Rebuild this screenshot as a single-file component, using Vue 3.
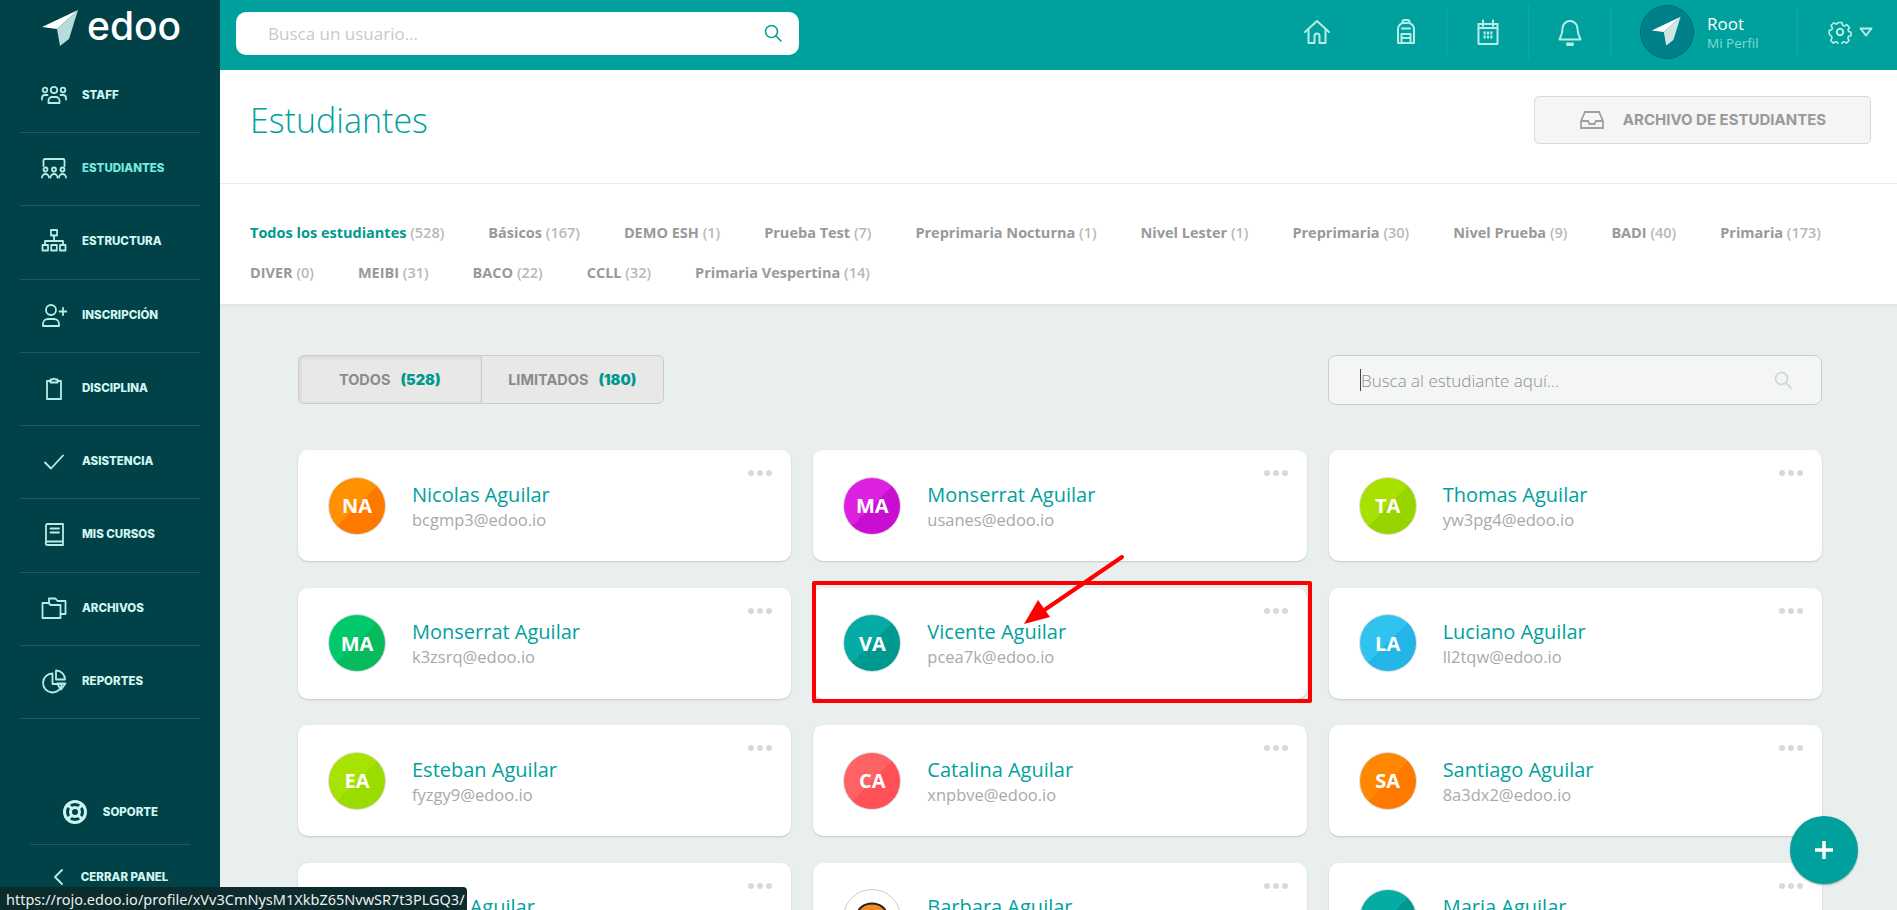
<script setup>
const circle = (x, y, r) => `M${x - r} ${y}a${r} ${r} 0 1 0 ${2 * r} 0a${r} ${r} 0 1 0 ${-2 * r} 0z`

const menu = [
  { label: 'STAFF', paths: [circle(13, 8, 3.2), circle(4, 8, 2.3), circle(22, 8, 2.3), 'M7.5 21v-2.5a3.5 3.5 0 0 1 3.5-3.5h4a3.5 3.5 0 0 1 3.5 3.5V21z', 'M1 17.5V16a3 3 0 0 1 3-3h2.5', 'M25 17.5V16a3 3 0 0 0-3-3h-2.5'] },
  { label: 'ESTUDIANTES', active: true, paths: ['M2.5 11V5.5A1.5 1.5 0 0 1 4 4h18a1.5 1.5 0 0 1 1.5 1.5V11', circle(4.5, 14.5, 2), circle(13, 14.5, 2), circle(21.5, 14.5, 2), 'M1 22.5a3.5 3.5 0 0 1 7 0', 'M9.5 22.5a3.5 3.5 0 0 1 7 0', 'M18 22.5a3.5 3.5 0 0 1 7 0'] },
  { label: 'ESTRUCTURA', paths: ['M10 2h6v5.5h-6z', 'M13 7.5V13', 'M4 17v-4h18v4', 'M1.5 17h5.5v5.5H1.5z', 'M10.2 17h5.6v5.5h-5.6z', 'M19 17h5.5v5.5H19z'] },
  { label: 'INSCRIPCIÓN', paths: [circle(10, 8, 5), 'M2 24v-2a5 5 0 0 1 5-5h6a5 5 0 0 1 5 5v2z', 'M22 6v7', 'M18.5 9.5h7'] },
  { label: 'DISCIPLINA', paths: ['M9.5 6H6v18h14V6h-3.5', 'M9.5 7.5V4.5h2.2a1.4 1.4 0 0 1 2.6 0h2.2v3z'] },
  { label: 'ASISTENCIA', paths: ['M4 14.5l6 6 12-13'] },
  { label: 'MIS CURSOS', paths: ['M5 20.5V4.5A1.5 1.5 0 0 1 6.5 3H22v21H6.5a1.7 1.7 0 0 1 0-3.5H22', 'M9.5 7.5h8.5', 'M9.5 11.5h8.5'] },
  { label: 'ARCHIVOS', paths: ['M8 8V3.5h6.5l2 2.5H24.5v13h-5', 'M1.5 8h6l2 2h10v13h-18z'] },
  { label: 'REPORTES', paths: ['M11.5 5.5a9.5 9.5 0 1 0 9.5 10.5h-9.5z', 'M15 2.5a9 9 0 0 1 9 9h-9z', 'M16 15.5h8.5l-4.5 6z'] }
]

const tabsList = [
  ['Todos los estudiantes', 528], ['Básicos', 167], ['DEMO ESH', 1], ['Prueba Test', 7],
  ['Preprimaria Nocturna', 1], ['Nivel Lester', 1], ['Preprimaria', 30], ['Nivel Prueba', 9], ['BADI', 40],
  ['Primaria', 173], ['DIVER', 0], ['MEIBI', 31], ['BACO', 22], ['CCLL', 32], ['Primaria Vespertina', 14]
]

const students = [
  { name: 'Nicolas Aguilar', email: 'bcgmp3@edoo.io', a: '#ff9000', b: '#ff7800' },
  { name: 'Monserrat Aguilar', email: 'usanes@edoo.io', a: '#dc22e0', b: '#c80ed0' },
  { name: 'Thomas Aguilar', email: 'yw3pg4@edoo.io', a: '#a8e000', b: '#98d400' },
  { name: 'Monserrat Aguilar', email: 'k3zsrq@edoo.io', a: '#00c96c', b: '#07ba5c' },
  { name: 'Vicente Aguilar', email: 'pcea7k@edoo.io', a: '#05aca4', b: '#00998f' },
  { name: 'Luciano Aguilar', email: 'll2tqw@edoo.io', a: '#30c3f0', b: '#22b5e6' },
  { name: 'Esteban Aguilar', email: 'fyzgy9@edoo.io', a: '#a8e200', b: '#9adb00' },
  { name: 'Catalina Aguilar', email: 'xnpbve@edoo.io', a: '#ff6265', b: '#ff5057' },
  { name: 'Santiago Aguilar', email: '8a3dx2@edoo.io', a: '#ff8800', b: '#ff7800' },
  { name: 'Pablo Aguilar', email: 'p4lm2x@edoo.io', a: '#ff8800', b: '#ff7800' },
  { name: 'Barbara Aguilar', email: 'bt7k2q@edoo.io', photo: true },
  { name: 'Maria Aguilar', email: 'm9xw2r@edoo.io', a: '#05aca4', b: '#00998f' }
]

const initials = (name) => name.split(' ').map((w) => w[0]).join('')
</script>

<template>
  <div class="app">
    <aside class="sidebar">
      <div class="logo">
        <svg width="40" height="40" viewBox="0 0 40 40">
          <path d="M1 18L37 1 16 20z" fill="#fff" />
          <path d="M37 1L16 20l3 17 9-7z" fill="#b5dcdb" />
        </svg>
        <span class="logo-text">edoo</span>
      </div>
      <nav>
        <a v-for="item in menu" :key="item.label" class="menu-item" :class="{ active: item.active }">
          <svg class="menu-icon" width="26" height="26" viewBox="0 0 26 26">
            <path v-for="(d, i) in item.paths" :key="i" :d="d" />
          </svg>
          <span>{{ item.label }}</span>
        </a>
      </nav>
      <div class="side-bottom">
        <a class="bottom-item">
          <svg width="26" height="26" viewBox="0 0 26 26" class="buoy">
            <circle cx="13" cy="13" r="10.5" />
            <circle cx="13" cy="13" r="4.5" />
            <path d="M5.5 5.5l4 4M20.5 5.5l-4 4M5.5 20.5l4-4M20.5 20.5l-4-4" />
          </svg>
          <span>SOPORTE</span>
        </a>
        <a class="bottom-item">
          <svg width="14" height="26" viewBox="0 0 14 26" class="menu-icon">
            <path d="M10 6l-7 7 7 7" />
          </svg>
          <span>CERRAR PANEL</span>
        </a>
      </div>
    </aside>

    <div class="main">
      <header class="topbar">
        <div class="user-search">
          <span>Busca un usuario...</span>
          <svg width="20" height="20" viewBox="0 0 20 20" fill="none" stroke="#00a19d" stroke-width="1.6">
            <circle cx="8.5" cy="8.5" r="6" />
            <path d="M13 13l5 5" stroke-linecap="round" />
          </svg>
        </div>
        <div class="top-actions">
          <div class="top-cell home">
            <svg class="top-icon" width="28" height="28" viewBox="0 0 28 28">
              <path d="M2 14L14 3l12 11" />
              <path d="M5.5 12v13h6v-7a2.5 2.5 0 0 1 5 0v7h6V12" />
            </svg>
          </div>
          <div class="top-cell sep">
            <svg class="top-icon" width="28" height="28" viewBox="0 0 28 28">
              <path d="M6 25V11a6 6 0 0 1 6-6h4a6 6 0 0 1 6 6v14z" />
              <path d="M10.5 5V4a2 2 0 0 1 2-2h3a2 2 0 0 1 2 2v1" />
              <path d="M9.5 25v-9h9v9M9.5 20h9M10 10.5h8" />
            </svg>
          </div>
          <div class="top-cell sep">
            <svg class="top-icon" width="28" height="28" viewBox="0 0 28 28">
              <path d="M4.5 6h19v20h-19z" />
              <path d="M9 2.5V8M19 2.5V8M4.5 10h19" />
              <path class="thick" d="M9.5 15h9M9.5 19h9" />
            </svg>
          </div>
          <div class="top-cell sep">
            <svg class="top-icon" width="28" height="28" viewBox="0 0 28 28">
              <path d="M14 3a7.5 7.5 0 0 0-7.5 7.5c0 7-3 9.500-3 11h21c0-1.500-3-4-3-11A7.500 7.500 0 0 0 14 3z" />
              <path d="M11 25.500a3 2.500 0 0 0 6 0z" fill="#b8ece6" />
            </svg>
          </div>
          <div class="profile sep">
            <div class="profile-pic">
              <svg width="32" height="34" viewBox="0 0 40 40">
                <path d="M1 18L37 1 16 20z" fill="#fff" />
                <path d="M37 1L16 20l3 17 9-7z" fill="#cfe6e4" />
              </svg>
            </div>
            <div class="profile-text">
              <div class="profile-name">Root</div>
              <div class="profile-sub">Mi Perfil</div>
            </div>
          </div>
          <div class="settings">
            <svg class="top-icon" width="24" height="24" viewBox="0 0 24 24">
              <circle cx="12" cy="12" r="3.2" />
              <path d="M10 2.500h4l.6 2.700 1.800.8 2.400-1.400 2.700 2.900-1.500 2.300.7 1.800 2.300.6v3.600l-2.500.6-.7 1.800 1.400 2.300-2.800 2.700-2.300-1.500-1.800.7-.6 2.500h-3.600l-.6-2.500-1.800-.7-2.300 1.400-2.800-2.700 1.500-2.300-.7-1.800L1.200 14v-3.600l2.500-.6.7-1.800L3 5.500l2.800-2.800 2.300 1.500 1.300-.6z" stroke-width="1.600" />
            </svg>
            <svg class="top-icon caret" width="14" height="10" viewBox="0 0 14 10">
              <path d="M1.500 1.500h11L7 8.500z" />
            </svg>
          </div>
        </div>
      </header>

      <section class="page-head">
        <h1>Estudiantes</h1>
        <button class="archive-btn">
          <svg width="26" height="20" viewBox="0 0 26 20" fill="none" stroke="#a0a0a0" stroke-width="1.800">
            <path d="M2 11l4-9h14l4 9v7H2z" />
            <path d="M2 11h7l1.500 3h5l1.500-3h7" />
          </svg>
          ARCHIVO DE ESTUDIANTES
        </button>
      </section>

      <section class="tabs">
        <a v-for="(tab, i) in tabsList" :key="tab[0]" :class="{ current: i === 0 }">
          {{ tab[0] }} <small>({{ tab[1] }})</small>
        </a>
      </section>

      <section class="content">
        <div class="filters">
          <div class="segment">
            <div class="seg selected">TODOS <b>(528)</b></div>
            <div class="seg">LIMITADOS <b>(180)</b></div>
          </div>
          <div class="student-search">
            <span class="caret-line"></span>
            <span class="ph">Busca al estudiante aquí...</span>
            <svg width="20" height="20" viewBox="0 0 20 20" fill="none" stroke="#d4d8d8" stroke-width="1.800">
              <circle cx="8.500" cy="8.500" r="6" />
              <path d="M13 13l5 5" stroke-linecap="round" />
            </svg>
          </div>
        </div>

        <div class="cards">
          <article v-for="s in students" :key="s.email" class="card">
            <div class="dots"><i></i><i></i><i></i></div>
            <div v-if="s.photo" class="avatar photo">
              <svg width="58" height="58" viewBox="0 0 58 58">
                <circle cx="29" cy="29" r="28.500" fill="#fff" stroke="#ccc" />
                <path d="M14 28C14 10 44 10 44 28c0 6 1 10 3 14H11c2-4 3-8 3-14z" fill="#f58a1f" stroke="#222" stroke-width="2" />
                <path d="M20 30c5-1 8-4 9-7 2 3 5 6 9 7 0 8-4 13-9 13s-9-5-9-13z" fill="#fde0c0" stroke="#222" stroke-width="2" />
              </svg>
            </div>
            <div v-else class="avatar" :style="{ background: `linear-gradient(135deg, ${s.a} 50%, ${s.b} 50%)` }">
              {{ initials(s.name) }}
            </div>
            <div class="info">
              <div class="name">{{ s.name }}</div>
              <div class="email">{{ s.email }}</div>
            </div>
          </article>
        </div>
      </section>
    </div>

    <!-- anotacion roja sobre la tarjeta -->
    <div class="mark-box"></div>
    <svg class="mark-arrow" width="120" height="90" viewBox="0 0 120 90">
      <path d="M112 6L30 62" stroke="#f00" stroke-width="4" stroke-linecap="round" />
      <path d="M14 73l14-24 12 17z" fill="#f00" />
    </svg>

    <button class="fab">
      <svg width="24" height="24" viewBox="0 0 24 24"><path d="M12 3v18M3 12h18" stroke="#fff" stroke-width="3.500" /></svg>
    </button>

    <div class="status-bar">https://rojo.edoo.io/profile/xVv3CmNysM1XkbZ65NvwSR7t3PLGQ3/</div>
  </div>
</template>

<style>
html,
body {
  margin: 0;
  height: 100%;
  overflow: hidden;
}
</style>

<style scoped>
.app {
  display: flex;
  height: 910px;
  overflow: hidden;
  position: relative;
  font-family: 'Open Sans', sans-serif;
  background: #e9eeee;
}

.sidebar {
  width: 220px;
  flex: none;
  background: #004247;
  display: flex;
  flex-direction: column;
}

.logo {
  height: 70px;
  display: flex;
  align-items: center;
  padding-left: 41px;
  gap: 6px;
  box-sizing: border-box;
}

.logo svg {
  margin-top: -2px;
}

.logo-text {
  font-family: Inter, sans-serif;
  font-size: 39px;
  font-weight: 500;
  color: #fff;
  line-height: 1;
  margin-top: -8px;
}

.menu-item {
  display: flex;
  align-items: center;
  gap: 15px;
  height: 73.25px;
  box-sizing: border-box;
  margin: 0 20px;
  padding: 0 0 2px 21px;
  border-bottom: 1px solid rgba(255, 255, 255, 0.13);
  font-family: Inter, sans-serif;
  font-size: 11.5px;
  font-weight: 800;
  color: #d2f6f2;
}

.menu-item.active {
  color: #76ebdf;
}

.menu-icon {
  fill: none;
  stroke: #b8ece6;
  stroke-width: 1.800;
  stroke-linecap: round;
  stroke-linejoin: round;
  flex: none;
}

.side-bottom {
  margin-top: 61px;
}

.bottom-item {
  display: flex;
  align-items: center;
  justify-content: center;
  gap: 15px;
  height: 64px;
  margin: 0 30px;
  font-family: Inter, sans-serif;
  font-size: 11.5px;
  font-weight: 800;
  color: #d2f6f2;
  border-bottom: 1px solid rgba(255, 255, 255, 0.13);
}

.buoy {
  fill: none;
  stroke: #c8f5f0;
  stroke-width: 3;
}

.main {
  flex: 1;
  min-width: 0;
  display: flex;
  flex-direction: column;
}

.topbar {
  height: 70px;
  flex: none;
  background: #00a19d;
  display: flex;
  align-items: center;
  padding-left: 16px;
}

.user-search {
  width: 563px;
  height: 43px;
  box-sizing: border-box;
  background: #fff;
  border-radius: 10px;
  display: flex;
  align-items: center;
  justify-content: space-between;
  padding: 0 16px 0 32px;
  font-size: 17px;
  color: #c9c9c9;
  margin-top: -4px;
}

.top-actions {
  margin-left: auto;
  display: flex;
  align-items: center;
  height: 100%;
}

.top-cell {
  width: 81px;
  height: 54px;
  display: flex;
  align-items: center;
  justify-content: center;
  margin-top: -6px;
}

.top-cell.home {
  margin-right: 8px;
}

.sep {
  border-right: 1px solid rgba(255, 255, 255, 0.08);
}

.top-icon {
  fill: none;
  stroke: #b8ece6;
  stroke-width: 2;
  stroke-linejoin: round;
  stroke-linecap: round;
}

.top-icon .thick {
  stroke-width: 3;
  stroke-dasharray: 2.200 1.200;
  stroke-linecap: butt;
}

.profile {
  width: 187px;
  height: 54px;
  display: flex;
  align-items: center;
  box-sizing: border-box;
  padding-left: 29px;
  gap: 13px;
  margin-top: -6px;
}

.profile-pic {
  width: 54px;
  height: 54px;
  border-radius: 50%;
  background: #008088;
  border: 1px solid #006e72;
  box-sizing: border-box;
  display: flex;
  align-items: center;
  justify-content: center;
  flex: none;
}

.profile-name {
  font-size: 17px;
  color: #fff;
  line-height: 21px;
}

.profile-sub {
  font-size: 13.500px;
  color: #7fdcd5;
  line-height: 18px;
}

.settings {
  width: 99px;
  display: flex;
  align-items: center;
  gap: 7px;
  padding-left: 30px;
  box-sizing: border-box;
  margin-top: -6px;
}

.page-head {
  height: 114px;
  flex: none;
  box-sizing: border-box;
  background: #fff;
  border-bottom: 1px solid #ececec;
  display: flex;
  align-items: center;
  justify-content: space-between;
  padding: 0 26px 0 30px;
}

h1 {
  margin: 0 0 14px;
  font-size: 34px;
  font-weight: 300;
  color: #00a19d;
}

.archive-btn {
  width: 337px;
  height: 48px;
  margin-bottom: 14px;
  display: flex;
  align-items: center;
  justify-content: center;
  gap: 18px;
  background: #f5f5f5;
  border: 1px solid #d9d9d9;
  border-radius: 5px;
  font-family: Inter, sans-serif;
  font-size: 15px;
  font-weight: 700;
  color: #999;
}

.tabs {
  height: 121px;
  flex: none;
  box-sizing: border-box;
  background: #fff;
  border-bottom: 1px solid #e3e6e6;
  box-shadow: 0 1px 3px rgba(0, 0, 0, 0.06);
  padding: 29px 60px 0 30px;
  display: flex;
  flex-wrap: wrap;
  align-content: flex-start;
  gap: 0 44px;
  font-size: 14.500px;
  line-height: 40px;
  font-weight: 700;
  color: #999;
}

.tabs small {
  font-size: inherit;
  color: #b8b8b8;
  font-weight: 600;
}

.tabs .current {
  color: #00998f;
}

.content {
  flex: 1;
  padding: 50px 75px 0 78px;
}

.filters {
  display: flex;
  justify-content: space-between;
  align-items: flex-start;
}

.segment {
  display: flex;
  width: 366px;
  height: 49px;
  box-sizing: border-box;
  background: #e8e8e8;
  border: 1px solid #ccc;
  border-radius: 6px;
  overflow: hidden;
  font-family: Inter, sans-serif;
  font-size: 14.500px;
  font-weight: 700;
  color: #8b8b8b;
}

.seg {
  flex: 1;
  display: flex;
  align-items: center;
  justify-content: center;
  gap: 10px;
}

.seg.selected {
  border-right: 1px solid #ccc;
  box-shadow: inset 1px 1px 4px rgba(0, 0, 0, 0.1);
}

.seg b {
  color: #00998f;
}

.student-search {
  width: 494px;
  height: 50px;
  box-sizing: border-box;
  border: 1px solid #ccc;
  border-radius: 8px;
  background: #f4f6f6;
  display: flex;
  align-items: center;
  padding: 0 28px 0 31px;
  font-size: 17px;
  font-weight: 300;
  color: #8f8f8f;
}

.caret-line {
  width: 1px;
  height: 22px;
  background: #444;
  flex: none;
}

.ph {
  flex: 1;
}

.cards {
  display: grid;
  grid-template-columns: repeat(3, 1fr);
  gap: 26.500px 22px;
  margin-top: 45px;
}

.card {
  position: relative;
  height: 111px;
  box-sizing: border-box;
  background: #fff;
  border-radius: 10px;
  box-shadow: 0 1px 2px rgba(0, 0, 0, 0.16);
  display: flex;
  align-items: center;
  padding: 0 30px;
  gap: 26px;
}

.dots {
  position: absolute;
  top: 20px;
  right: 19px;
  display: flex;
  gap: 3px;
}

.dots i {
  width: 6px;
  height: 6px;
  border-radius: 50%;
  background: #d9d9dd;
}

.avatar {
  width: 58px;
  height: 58px;
  flex: none;
  box-sizing: border-box;
  border-radius: 50%;
  border: 1px solid #ddd;
  display: flex;
  align-items: center;
  justify-content: center;
  font-size: 20px;
  font-weight: 700;
  color: #fff;
}

.avatar.photo {
  border: 0;
}

.name {
  font-size: 20px;
  line-height: 27px;
  color: #00a19d;
}

.email {
  font-size: 16.500px;
  line-height: 23px;
  color: #a9a9a9;
}

.mark-box {
  position: absolute;
  left: 812px;
  top: 581px;
  width: 500px;
  height: 122px;
  box-sizing: border-box;
  border: 4px solid #f00;
  border-radius: 2px;
}

.mark-arrow {
  position: absolute;
  left: 1010px;
  top: 551px;
}

.fab {
  position: absolute;
  left: 1790px;
  top: 816px;
  width: 68px;
  height: 68px;
  border: 0;
  border-radius: 50%;
  background: #00a19d;
  box-shadow: 0 1px 2px rgba(0, 0, 0, 0.35);
  display: flex;
  align-items: center;
  justify-content: center;
}

.status-bar {
  position: absolute;
  left: 0;
  bottom: 0;
  height: 23px;
  width: 467px;
  box-sizing: border-box;
  padding-left: 6px;
  background: #0d2a2c;
  border-top-right-radius: 4px;
  color: #e8f0f0;
  font-family: 'Noto Sans', sans-serif;
  font-size: 14.500px;
  line-height: 24px;
  white-space: nowrap;
}
</style>
